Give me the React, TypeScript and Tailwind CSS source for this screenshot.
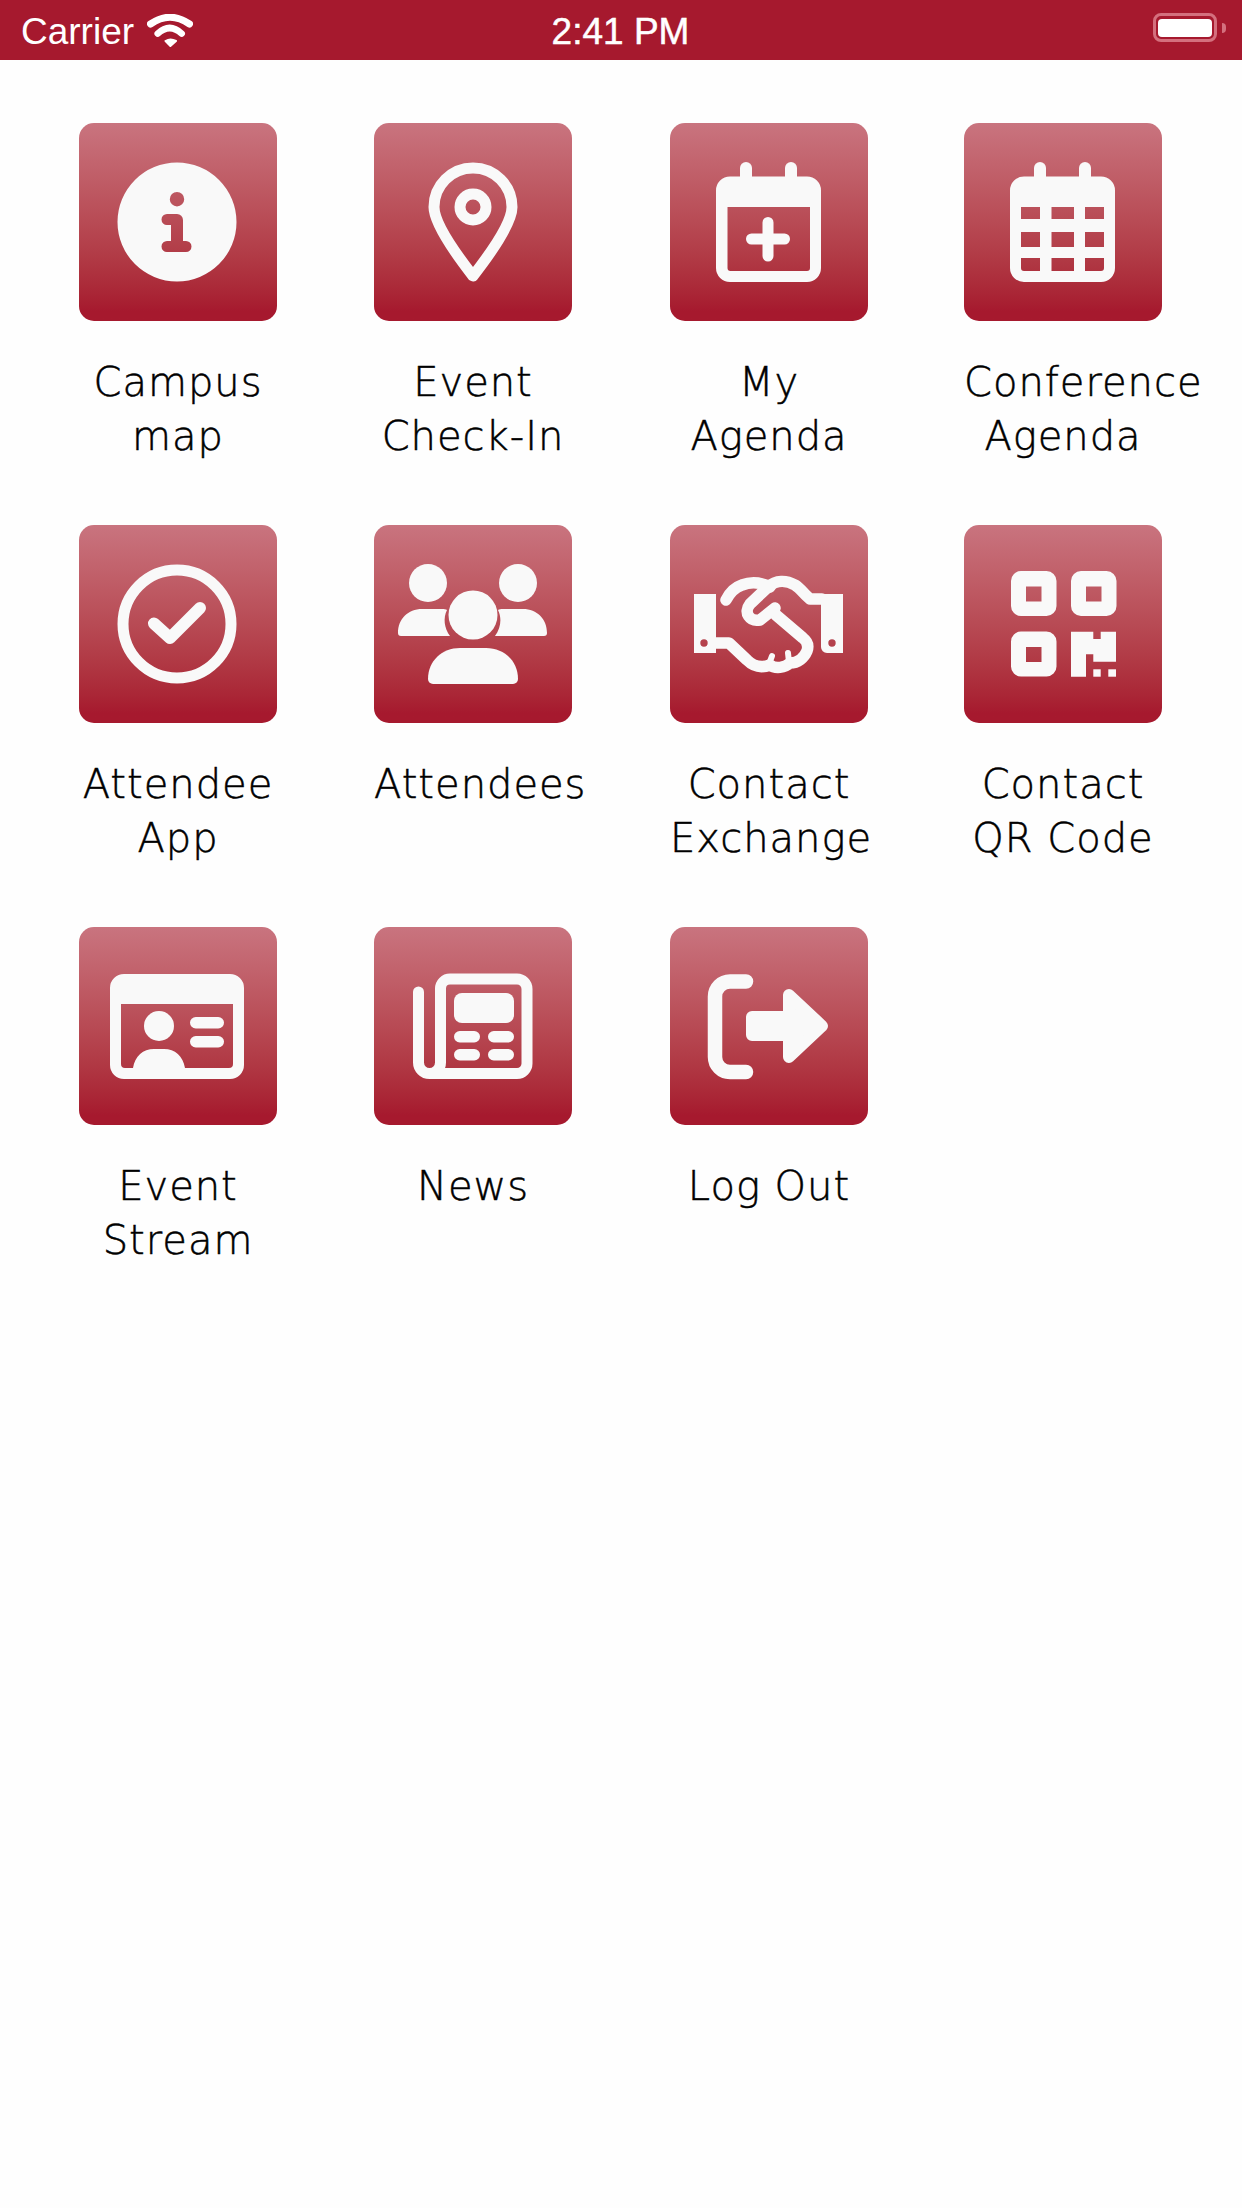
import type { ReactNode } from "react";

const WHITE = "#f9f9f9";

function InfoIcon() {
  return (
    <path
      fill={WHITE}
      fillRule="evenodd"
      d="M98 39.500a59.500 59.500 0 1 0 0 119 59.500 59.500 0 0 0 0-119ZM98 69a7.200 7.200 0 1 1 0 14.400A7.200 7.200 0 0 1 98 69ZM88 91h10a6 6 0 0 1 6 6v21h3a5.500 5.500 0 0 1 0 11H88a5.500 5.500 0 0 1 0-11h4v-16h-4a5.500 5.500 0 0 1 0-11Z"
    />
  );
}

function PinIcon() {
  return (
    <g fill="none" stroke={WHITE} strokeWidth="11" strokeLinejoin="round">
      <path d="M99 153C92 144 60 103 60 84a39 39 0 0 1 78 0c0 19-32 60-39 69Z" />
      <circle cx="99" cy="84" r="13" />
    </g>
  );
}

function CalendarBody({ holes }: { holes: string }) {
  return (
    <>
      <rect x="70" y="39" width="12" height="24" rx="6" fill={WHITE} />
      <rect x="115" y="39" width="12" height="24" rx="6" fill={WHITE} />
      <path
        fill={WHITE}
        fillRule="evenodd"
        d={`M60 53.500h77a14 14 0 0 1 14 14V145a14 14 0 0 1-14 14H60a14 14 0 0 1-14-14V67.500a14 14 0 0 1 14-14Z${holes}`}
      />
    </>
  );
}

function AddCalendarIcon() {
  return (
    <>
      <CalendarBody holes="M57.500 84V145a3 3 0 0 0 3 3H137a3 3 0 0 0 3-3V84Z" />
      <path d="M98 99.500V133M81.500 116h33" stroke={WHITE} strokeWidth="11" strokeLinecap="round" />
    </>
  );
}

function GridCalendarIcon() {
  return (
    <CalendarBody holes="M57 84h19v12H57ZM87.500 84H110v12H87.500ZM121 84h19v12h-19ZM57 109h19v15H57ZM87.500 109H110v15H87.500ZM121 109h19v15h-19ZM57 135h19v13H60a3 3 0 0 1-3-3ZM87.500 135H110v13H87.500ZM121 135h19v10a3 3 0 0 1-3 3h-16Z" />
  );
}

function CheckIcon() {
  return (
    <g fill="none" stroke={WHITE} strokeLinecap="round" strokeLinejoin="round">
      <circle cx="98" cy="99" r="54" strokeWidth="11" />
      <path d="M75 98.500 91 113l30-30" strokeWidth="12" />
    </g>
  );
}

function PeopleIcon() {
  return (
    <g fill={WHITE}>
      <circle cx="54" cy="58" r="19" />
      <circle cx="144" cy="58" r="19" />
      <circle cx="99" cy="90" r="24.500" />
      <path d="M24 108c0-14 10-24 24-24h20c2 0 4 0 5 1-4 8-3 18 3 26H27a3 3 0 0 1-3-3Z" />
      <path d="M173 108c0-14-10-24-24-24h-20c-2 0-4 0-5 1 4 8 3 18-3 26h49a3 3 0 0 0 3-3Z" />
      <path d="M54 154c0-18 14-31 32-31h26c18 0 32 13 32 31a5 5 0 0 1-5 5H59a5 5 0 0 1-5-5Z" />
    </g>
  );
}

function HandshakeIcon() {
  return (
    <>
      <path
        fill={WHITE}
        fillRule="evenodd"
        d="M24 69h22v59H24ZM34 114.300a3.700 3.700 0 1 0 0 7.400 3.700 3.700 0 0 0 0-7.400ZM151 69h22v59h-16a6 6 0 0 1-6-6ZM162 114.300a3.700 3.700 0 1 0 0 7.400 3.700 3.700 0 0 0 0-7.400Z"
      />
      <g fill="none" stroke={WHITE} strokeWidth="11.500" strokeLinecap="round" strokeLinejoin="round">
        <path d="M44 118H59L77 135C84 142 92 143 100 140C105 144 115 143 120 138C128 138 134 133 137 126C139 120 137 116 133 113L106 90" />
        <path d="M56 75C60 67 66 62 72 60C80 57 90 57 100 62" />
        <path d="M105 83L90 95C80 97 73 88 80 79L98 62C106 55 116 55 125 60C130 63 135 70 140 74H152" />
        <path d="M99 139 102 131M119 137 118 128" strokeWidth="6" />
      </g>
    </>
  );
}

function QrIcon() {
  const square = (x: number, y: number) =>
    `M${x + 10} ${y}h25.500a10 10 0 0 1 10 10v25a10 10 0 0 1-10 10h-25.500a10 10 0 0 1-10-10v-25a10 10 0 0 1 10-10Zm5 15.500v15h15.500v-15Z`;
  return (
    <g fill={WHITE}>
      <path fillRule="evenodd" d={square(47, 46) + square(107, 46) + square(47, 106.500)} />
      <path d="M107 106.700H129.300V114H136.700V106.700H152V136.700H129.300V129.300H122V151.700H107Z" />
      <rect x="129.300" y="144.300" width="7.400" height="7.400" />
      <rect x="144.300" y="144.300" width="7.700" height="7.400" />
    </g>
  );
}

function CardIcon() {
  return (
    <g fill={WHITE}>
      <path
        fillRule="evenodd"
        d="M45 47h106a14 14 0 0 1 14 14v77a14 14 0 0 1-14 14H45a14 14 0 0 1-14-14V61a14 14 0 0 1 14-14ZM42 77v60a4 4 0 0 0 4 4h8c2-12 10-19 21-19h10c11 0 19 7 21 19h44a4 4 0 0 0 4-4V77Z"
      />
      <circle cx="80" cy="99" r="15" />
      <rect x="111" y="90" width="34" height="11.500" rx="5.750" />
      <rect x="111" y="109" width="34" height="11.500" rx="5.750" />
    </g>
  );
}

function NewsIcon() {
  return (
    <>
      <path
        d="M44.500 65V135.500a11 11 0 0 0 11 11H143a10 10 0 0 0 10-10V62a10 10 0 0 0-10-10H76a9.500 9.500 0 0 0-9.500 9.500V135.500a11 11 0 0 1-11 11"
        fill="none"
        stroke={WHITE}
        strokeWidth="11"
        strokeLinecap="round"
      />
      <g fill={WHITE}>
        <rect x="80" y="66" width="60" height="30" rx="8" />
        <rect x="80" y="104" width="26" height="11.500" rx="5.750" />
        <rect x="114" y="104" width="26" height="11.500" rx="5.750" />
        <rect x="80" y="122" width="26" height="11.500" rx="5.750" />
        <rect x="114" y="122" width="26" height="11.500" rx="5.750" />
      </g>
    </>
  );
}

function LogoutIcon() {
  return (
    <>
      <path
        d="M76 54.500H60a15 15 0 0 0-15 15V130a15 15 0 0 0 15 15h16"
        fill="none"
        stroke={WHITE}
        strokeWidth="14.500"
        strokeLinecap="round"
      />
      <path
        d="M82 90H119V68L152 99L119 130V108H82Z"
        fill={WHITE}
        stroke={WHITE}
        strokeWidth="12"
        strokeLinejoin="round"
      />
    </>
  );
}

interface Item {
  label: string;
  icon: ReactNode;
}

const items: Item[] = [
  { label: "Campus map", icon: <InfoIcon /> },
  { label: "Event Check-In", icon: <PinIcon /> },
  { label: "My Agenda", icon: <AddCalendarIcon /> },
  { label: "Conference Agenda", icon: <GridCalendarIcon /> },
  { label: "Attendee App", icon: <CheckIcon /> },
  { label: "Attendees", icon: <PeopleIcon /> },
  { label: "Contact Exchange", icon: <HandshakeIcon /> },
  { label: "Contact QR Code", icon: <QrIcon /> },
  { label: "Event Stream", icon: <CardIcon /> },
  { label: "News", icon: <NewsIcon /> },
  { label: "Log Out", icon: <LogoutIcon /> },
];

function StatusBar() {
  return (
    <div className="grid h-[60px] grid-cols-3 items-center bg-[#a6192e] pl-[21px] pr-[16px] font-['Liberation_Sans',sans-serif] text-[37px] text-white">
      <div className="flex items-center gap-[13px]">
        <span className="pt-[2px] leading-none">Carrier</span>
        <svg width="46" height="33" viewBox="0 0 46 33" fill="none" stroke="white" strokeLinecap="round">
          <path d="M3.500 10Q23-3.500 42.500 10" strokeWidth="7" />
          <path d="M10.700 19.600Q22.700 8.400 34.700 19.600" strokeWidth="6.500" />
          <path d="M18.500 27Q23.400 24 29 27L23.400 32Z" fill="white" strokeWidth="2" strokeLinejoin="round" />
        </svg>
      </div>
      <div className="pr-[6px] pt-[2px] text-center leading-none [-webkit-text-stroke:0.5px_white]">2:41 PM</div>
      <div className="flex items-center justify-end gap-[5px] pb-[5px]">
        <div className="flex h-[29px] w-[64px] items-center justify-center rounded-[8px] border-[3px] border-[#d4707e]">
          <div className="h-[18px] w-[54px] rounded-[4px] bg-white" />
        </div>
        <div className="h-[10px] w-[4px] rounded-r-full bg-[#d4707e]" />
      </div>
    </div>
  );
}

export default function App() {
  return (
    <div className="min-h-[2208px] bg-[#fefefe]">
      <StatusBar />
      <div className="grid grid-cols-[296px_294px_298px_290px] gap-y-[62px] pl-[30px] pt-[63px]">
        {items.map((item) => (
          <div key={item.label} className="flex flex-col items-center">
            <div className="h-[198px] w-[198px] rounded-[15px] bg-gradient-to-b from-[#c9747f] to-[#a6192e] to-95%">
              <svg width="198" height="198" viewBox="0 0 198 198">
                {item.icon}
              </svg>
            </div>
            <div className="mt-[34px] w-[198px] text-center font-['DejaVu_Sans',sans-serif] text-[40px] leading-[54px] font-extralight tracking-[1px] text-black [-webkit-text-stroke:0.5px_black]">
              {item.label}
            </div>
          </div>
        ))}
      </div>
    </div>
  );
}
